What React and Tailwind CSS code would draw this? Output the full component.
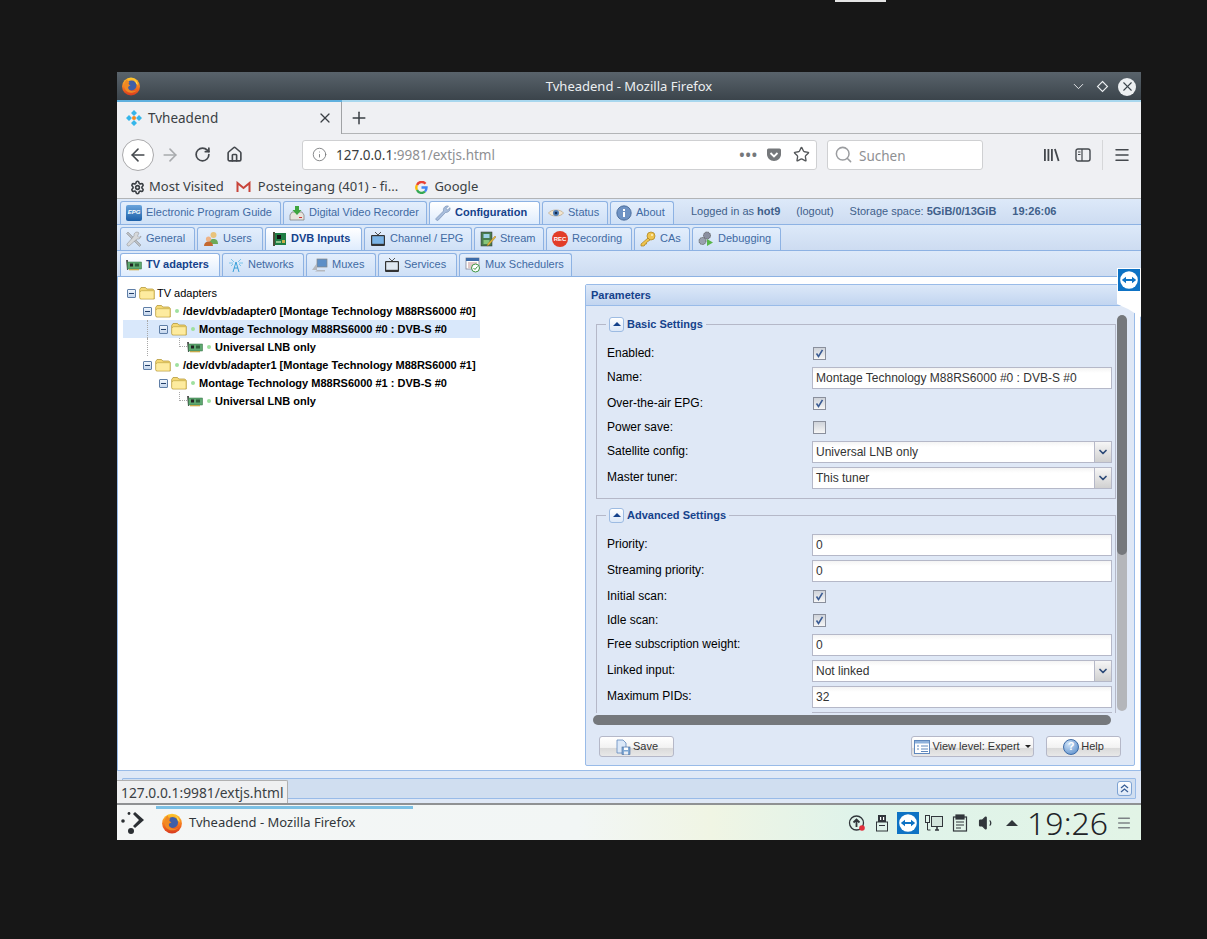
import { ChevronDown, Home, RotateCw, ArrowLeft, ArrowRight, Info, Star, Search, Menu, Plus, X, Settings, Volume1 } from 'lucide-react';

const Firefox = ({ size = 20 }) => (
  <svg width={size} height={size} viewBox="0 0 20 20">
    <defs>
      <linearGradient id="ffa" x1="0" y1="0" x2="0" y2="1">
        <stop offset="0" stopColor="#ffcb2e" />
        <stop offset="0.55" stopColor="#f5761f" />
        <stop offset="1" stopColor="#d8391f" />
      </linearGradient>
    </defs>
    <circle cx="10" cy="10.5" r="9" fill="url(#ffa)" />
    <circle cx="10.5" cy="9.5" r="5" fill="#3f5fa8" />
    <path d="M6 3c-3 3-4 8-1 11.500 3 3 8 3 11-.500-3 2-7 1.500-8.500-1-1-2 0-3 2-3.500-2-1-2.500-2-1-3.500C7.500 6 6.500 5 6 3z" fill="#f08a24" />
    <path d="M12 3c3 1 5 4 5 7 0-1-1-2-2-2.500C15 6 14 4 12 3z" fill="#ffe14d" />
  </svg>
);

const Tvh = () => (
  <svg width="16" height="16" viewBox="0 0 16 16">
    <path d="M8 0l3 3-3 3-3-3zM8 10l3 3-3 3-3-3z" fill="#35b6ea" />
    <path d="M3 5l3 3-3 3-3-3zM13 5l3 3-3 3-3-3z" fill="#35b6ea" />
    <circle cx="8" cy="8" r="2" fill="#f28a1e" />
  </svg>
);

const Epg = () => (
  <span className="flex h-[16px] w-[16px] items-center justify-center rounded-[2px] bg-[linear-gradient(#6aa4dc,#1c5fa8)] text-[6px] font-bold italic text-white">EPG</span>
);

const Dvr = () => (
  <svg width="16" height="16" viewBox="0 0 16 16">
    <path d="M1 10l2-3h10l2 3v5H1z" fill="#e8e4dc" stroke="#777" strokeWidth="0.7" />
    <rect x="10" y="12" width="3" height="1" fill="#c33" />
    <path d="M6 1h4v4h2.500L8 10 3.500 5H6z" fill="#3fa63f" />
  </svg>
);

const Wrench = () => (
  <svg width="16" height="16" viewBox="0 0 16 16">
    <path d="M1 13.500L8.500 6c-.5-2 .5-4.500 3-5 1-.2 1.500 0 2 .3L11 3.500l1.500 1.500L15 2.700c.5 2-1 4.800-4.500 4.800L3.200 15.200c-1 .8-3-.6-2.200-1.700z" fill="#a9bedc" stroke="#6d86ad" strokeWidth="0.6" />
  </svg>
);

const Eye = () => (
  <svg width="16" height="16" viewBox="0 0 16 16">
    <path d="M0.500 8C3 4 13 4 15.500 8 13 12 3 12 .5 8z" fill="#f1e5d0" stroke="#b79a70" strokeWidth="0.6" />
    <circle cx="8" cy="8" r="3" fill="#4d7cb5" />
    <circle cx="8" cy="8" r="1.300" fill="#13294a" />
  </svg>
);

const About = () => (
  <svg width="16" height="16" viewBox="0 0 16 16">
    <circle cx="8" cy="8" r="7.200" fill="#6f93c4" stroke="#3c5f90" strokeWidth="0.8" />
    <rect x="7" y="7" width="2" height="5" fill="#fff" />
    <rect x="7" y="4" width="2" height="2" fill="#fff" />
  </svg>
);

const Tools = () => (
  <svg width="16" height="16" viewBox="0 0 16 16">
    <path d="M2 1l13 13-1.500 1.500L.5 2.500z" fill="#b9bdc2" stroke="#777" strokeWidth="0.4" />
    <path d="M11 1c-2 0-3.500 2-3 4L1 13c-.5 1 1 2.500 2 2l8-7c2 .5 4-1 4-3l-2 1.500L11.500 5 13 2c-.5-.5-1-1-2-1z" fill="#d6d8da" stroke="#777" strokeWidth="0.4" />
  </svg>
);

const Users = () => (
  <svg width="16" height="16" viewBox="0 0 16 16">
    <circle cx="10.500" cy="4" r="3" fill="#e9c37c" />
    <path d="M6 13c0-4 2-5 4.500-5s4.500 1 4.500 5z" fill="#6eaa58" />
    <circle cx="5.500" cy="8" r="2.600" fill="#eeb285" />
    <path d="M1 15c0-3 2-4.500 4.500-4.500S10 12 10 15z" fill="#c4682f" />
  </svg>
);

const Card = () => (
  <svg width="16" height="16" viewBox="0 0 16 16">
    <rect x="2" y="1" width="2" height="14" fill="#4d4d3a" />
    <rect x="4" y="2" width="11" height="12" fill="#1e7d45" />
    <rect x="6" y="4" width="4" height="4" fill="#111" />
    <rect x="11" y="9" width="3" height="3" fill="#c9b04a" />
    <rect x="5" y="10" width="5" height="2" fill="#8fc58f" />
  </svg>
);

const WideCard = () => (
  <svg width="16" height="16" viewBox="0 0 16 16">
    <path d="M0 3h2v10H1z" fill="#555" />
    <rect x="1.500" y="5" width="14" height="7" fill="#5ea870" stroke="#2f6b3f" strokeWidth="0.5" />
    <rect x="4" y="6.500" width="3" height="3" fill="#222" />
    <rect x="9" y="6.500" width="4" height="3" fill="#2f5f3a" />
    <rect x="3" y="12" width="10" height="1.300" fill="#c6a94b" />
  </svg>
);

const Tv = ({ fill = '#7bb4e6' }) => (
  <svg width="16" height="16" viewBox="0 0 16 16">
    <path d="M5 1l3 3 3-3" fill="none" stroke="#444" strokeWidth="0.9" />
    <rect x="1" y="4" width="14" height="11" rx="1" fill="#333" />
    <rect x="2.200" y="5.200" width="11.600" height="7.600" fill={fill} />
  </svg>
);

const Stream = () => (
  <svg width="16" height="16" viewBox="0 0 16 16">
    <rect x="1" y="1" width="11" height="14" fill="#4a7c4f" stroke="#333" strokeWidth="0.5" />
    <rect x="3.500" y="3" width="6" height="4" fill="#9fd3e6" />
    <rect x="3.500" y="9" width="6" height="4" fill="#86c67a" />
    <path d="M15 5l1 1-7 8-2 1 .5-2z" fill="#e7b83e" stroke="#8a6b1c" strokeWidth="0.4" />
  </svg>
);

const Rec = () => (
  <span className="flex h-[16px] w-[16px] items-center justify-center rounded-full bg-[#e23d28] text-[6px] font-bold leading-none text-white">REC</span>
);

const Key = () => (
  <svg width="16" height="16" viewBox="0 0 16 16">
    <circle cx="11" cy="5" r="4" fill="#efc44f" stroke="#a87f1c" strokeWidth="0.7" />
    <path d="M8 7l-7 6v2h3l1-1v-1h1.500V11.500L10 9z" fill="#efc44f" stroke="#a87f1c" strokeWidth="0.7" />
    <circle cx="12" cy="4" r="1" fill="#fff3c4" />
  </svg>
);

const Gears = () => (
  <svg width="16" height="16" viewBox="0 0 16 16">
    <circle cx="9" cy="4.500" r="3.500" fill="#8a8fa0" stroke="#555" strokeWidth="0.8" strokeDasharray="1.200 0.500" />
    <circle cx="4.500" cy="10" r="3.500" fill="#9aa0ae" stroke="#555" strokeWidth="0.8" strokeDasharray="1.200 0.500" />
    <path d="M9 8l6 3.500L9 15z" fill="#59b64a" />
  </svg>
);

const Tower = () => (
  <svg width="16" height="16" viewBox="0 0 16 16" fill="none" stroke="#3aa0d8" strokeWidth="1">
    <path d="M8 5L5 15M8 5l3 10M6 11h4" />
    <path d="M3 2l3 3M13 2l-3 3M1 6h4M15 6h-4M3 9l2-2M13 9l-2-2" stroke="#7cc4ea" />
  </svg>
);

const Muxes = () => (
  <svg width="16" height="16" viewBox="0 0 16 16">
    <rect x="5" y="2" width="10" height="8" fill="#5d8fc7" stroke="#888" strokeWidth="0.7" />
    <path d="M0 13l5-7v7zM5 13h8v1.500H3z" fill="#b5b8bd" />
  </svg>
);

const Sched = () => (
  <svg width="16" height="16" viewBox="0 0 16 16">
    <rect x="1" y="1" width="13" height="11" fill="#fff" stroke="#778" strokeWidth="0.7" />
    <rect x="1" y="1" width="13" height="3" fill="#3c6ba8" />
    <path d="M3 6h9M3 8h9M3 10h5" stroke="#a66" strokeWidth="0.7" />
    <circle cx="10.500" cy="11" r="4" fill="#fff" stroke="#3d9440" strokeWidth="1" />
    <path d="M8.500 11l1.500 1.500 2.500-3" fill="none" stroke="#3d9440" />
  </svg>
);

const Folder = () => (
  <svg width="16" height="16" viewBox="0 0 16 16">
    <path d="M.7 4.500l1.300-2h4.500l1.300 1.500h6l1.500 1.500v8.500H2q-1.300 0-1.300-1.300z" fill="#f5d873" stroke="#b59a3c" strokeWidth="0.8" />
    <path d="M1.300 7q0-1.300 1.300-1.300h11.800V13.500H2.500q-1.200 0-1.200-1.200z" fill="#fdeb9f" />
    <path d="M1.300 7q0-1.300 1.300-1.300h12.200" fill="none" stroke="#c7ad4d" strokeWidth="0.8" />
  </svg>
);

const SaveIcon = () => (
  <svg width="16" height="16" viewBox="0 0 16 16">
    <path d="M2 1h6l3 3v10H2z" fill="#dbe8f8" stroke="#5f88bd" strokeWidth="0.8" />
    <rect x="7" y="8" width="8" height="7.500" fill="#7fa8d4" stroke="#46699a" strokeWidth="0.6" />
    <rect x="9" y="8.500" width="4" height="2.500" fill="#fff" />
    <rect x="9" y="12.500" width="4" height="3" fill="#e9eef5" />
  </svg>
);

const ViewIcon = () => (
  <svg width="16" height="16" viewBox="0 0 16 16">
    <rect x="0.500" y="1.500" width="15" height="13" fill="#fff" stroke="#5f88bd" />
    <rect x="1" y="2" width="14" height="2.500" fill="#8fb2dc" />
    <path d="M3 7h2M3 10h2M7 7h7M7 10h7M7 12.500h7" stroke="#5f88bd" />
  </svg>
);

const HelpIcon = () => (
  <span className="flex h-[16px] w-[16px] items-center justify-center rounded-full border border-[#3c6ba8] bg-[radial-gradient(circle_at_35%_30%,#cfe2f7,#4f86c6)] text-[11px] font-bold text-white">?</span>
);

const TeamV = ({ size = 22 }) => (
  <svg width={size} height={size} viewBox="0 0 22 22">
    <rect width="22" height="22" fill="#0e72c4" />
    <circle cx="11" cy="11" r="8.800" fill="#fff" />
    <path d="M3.800 11L8 7.800V10h6V7.800l4.200 3.200-4.200 3.200V12H8v2.200z" fill="#0e72c4" />
  </svg>
);

const tabGradient = 'bg-[linear-gradient(#e3eefc,#cfe0f6)]';

const Tab = ({ label, icon, active, width }) => (
  <div
    className={`flex h-full ${width} items-center gap-[4px] rounded-t-[3px] border border-b-0 border-[#8db2e3] pb-[1px] pl-[5px] text-[11px] ${
      active ? 'bg-[linear-gradient(#ffffff,#deecfd)] font-bold text-[#15428b]' : `${tabGradient} text-[#416aa3]`
    }`}
  >
    <span className="flex h-[16px] w-[16px] shrink-0 items-center justify-center">{icon}</span>
    <span className="whitespace-nowrap">{label}</span>
  </div>
);

const Strip = ({ tabs, children }) => (
  <div className="flex h-[26px] shrink-0 gap-[2px] border-b border-[#8db2e3] bg-[linear-gradient(#dde9f9,#cddcf1)] pl-[3px] pt-[2px]">
    {tabs.map((t) => (
      <Tab key={t.label} {...t} />
    ))}
    {children}
  </div>
);

const row1 = [
  { label: 'Electronic Program Guide', icon: <Epg />, width: 'w-[161px]' },
  { label: 'Digital Video Recorder', icon: <Dvr />, width: 'w-[144px]' },
  { label: 'Configuration', icon: <Wrench />, width: 'w-[111px]', active: true },
  { label: 'Status', icon: <Eye />, width: 'w-[66px]' },
  { label: 'About', icon: <About />, width: 'w-[64px]' },
];

const row2 = [
  { label: 'General', icon: <Tools />, width: 'w-[75px]' },
  { label: 'Users', icon: <Users />, width: 'w-[66px]' },
  { label: 'DVB Inputs', icon: <Card />, width: 'w-[97px]', active: true },
  { label: 'Channel / EPG', icon: <Tv />, width: 'w-[108px]' },
  { label: 'Stream', icon: <Stream />, width: 'w-[70px]' },
  { label: 'Recording', icon: <Rec />, width: 'w-[86px]' },
  { label: 'CAs', icon: <Key />, width: 'w-[56px]' },
  { label: 'Debugging', icon: <Gears />, width: 'w-[89px]' },
];

const row3 = [
  { label: 'TV adapters', icon: <WideCard />, width: 'w-[100px]', active: true },
  { label: 'Networks', icon: <Tower />, width: 'w-[82px]' },
  { label: 'Muxes', icon: <Muxes />, width: 'w-[70px]' },
  { label: 'Services', icon: <Tv fill="#dfe8f2" />, width: 'w-[79px]' },
  { label: 'Mux Schedulers', icon: <Sched />, width: 'w-[113px]' },
];

const Expander = () => (
  <span className="flex h-[16px] w-[16px] shrink-0 items-center justify-center">
    <span className="flex h-[9px] w-[9px] items-center justify-center rounded-[1px] border border-[#5f7ea6] bg-[linear-gradient(#f2f7fd,#c3d5ec)]">
      <span className="h-px w-[5px] bg-[#23406b]" />
    </span>
  </span>
);

const Indent = ({ line }) => (
  <span className="flex h-[18px] w-[16px] shrink-0 justify-center">
    {line && <span className="h-full border-l border-dotted border-[#a8a8a8]" />}
  </span>
);

const Elbow = () => (
  <span className="flex h-[18px] w-[16px] shrink-0 justify-end">
    <span className="h-[9px] w-[8px] border-b border-l border-dotted border-[#a8a8a8]" />
  </span>
);

const Dot = () => (
  <span className="flex w-[12px] shrink-0 pl-[4px]">
    <span className="h-[4px] w-[4px] rounded-full bg-[#9fe09f]" />
  </span>
);

const TreeRow = ({ indents = [], leaf, selected, plain, label }) => (
  <div className={`flex h-[18px] w-[357px] items-center ${selected ? 'bg-[#d9e8fb]' : ''}`}>
    {indents.map((line, i) => (
      <Indent key={i} line={line} />
    ))}
    {leaf ? <Elbow /> : <Expander />}
    <span className="flex h-[16px] w-[16px] shrink-0 items-center justify-center">{leaf ? <WideCard /> : <Folder />}</span>
    {plain ? <span className="w-[2px]" /> : <Dot />}
    <span className={`whitespace-nowrap text-[11px] text-black ${plain ? '' : 'font-bold'}`}>{label}</span>
  </div>
);

const inputCls = 'h-[22px] w-[300px] border border-[#b5b8c8] bg-[linear-gradient(#f4f4f4,#ffffff_25%)] pl-[3px] text-[12px] leading-[20px] text-[#333]';

const Label = ({ children, shift }) => (
  <span className={`w-[205px] shrink-0 text-[12px] text-black ${shift ? 'pb-[2px]' : ''}`}>{children}</span>
);

const TextRow = ({ label, value }) => (
  <div className="flex h-[22px] items-center">
    <Label shift>{label}</Label>
    <div className={inputCls}>{value}</div>
  </div>
);

const ComboRow = ({ label, value }) => (
  <div className="flex h-[22px] items-center">
    <Label shift>{label}</Label>
    <div className={`${inputCls} relative`}>
      {value}
      <span className="absolute inset-y-0 right-0 flex w-[17px] items-center justify-center border-l border-[#b5b8c8] bg-[linear-gradient(#f6f6f6,#d0d0d0)]">
        <ChevronDown size={12} strokeWidth={3.5} className="text-[#2c4a78]" />
      </span>
    </div>
  </div>
);

const CheckRow = ({ label, checked }) => (
  <div className="flex h-[20px] items-center">
    <Label>{label}</Label>
    <span className="ml-[1px] flex h-[13px] w-[13px] items-center justify-center border border-[#8a8f9c] bg-[linear-gradient(#cfd3da,#f6f6f6)]">
      {checked && (
        <svg width="9" height="9" viewBox="0 0 9 9">
          <path d="M1.500 4.500l2 3L7.500 .8" fill="none" stroke="#3b5c94" strokeWidth="1.600" />
        </svg>
      )}
    </span>
  </div>
);

const Section = ({ title, children, last }) => (
  <fieldset className={`w-[520px] border border-[#b5b8c8] pb-[9px] pl-[10px] ${last ? '' : 'mb-[8px]'}`}>
    <legend className="-ml-[1px] flex h-[16px] items-center gap-[3px] px-[3px]">
      <span className="flex h-[15px] w-[15px] items-center justify-center rounded-[3px] border border-[#9dbbe2] bg-[linear-gradient(#ffffff,#dce8f8)]">
        <span className="h-0 w-0 border-x-[4px] border-b-[4px] border-x-transparent border-b-[#15428b]" />
      </span>
      <span className="text-[11px] font-bold text-[#15428b]">{title}</span>
    </legend>
    <div className="flex flex-col gap-[4px] pt-[11px]">{children}</div>
  </fieldset>
);

const ExtButton = ({ width, icon, children }) => (
  <button className={`flex h-[21px] ${width} items-center justify-center gap-[2px] rounded-[3px] border border-[#b5b8c8] bg-[linear-gradient(#ffffff,#f2f2f2_55%,#dadada_60%,#e8e8e8)] text-[11px] text-[#333]`}>
    {icon}
    {children}
  </button>
);

const TitleBar = () => (
  <div className="relative flex h-[28px] shrink-0 items-center justify-center bg-[linear-gradient(#59636b,#3b444b)] pt-[1px] text-[13px] text-[#eceff1]">
    <span className="absolute left-[4px] top-[4px]">
      <Firefox />
    </span>
    Tvheadend - Mozilla Firefox
    <span className="absolute right-[5px] flex items-center gap-[9px]">
      <ChevronDown size={17} strokeWidth={1.300} className="text-[#eceff1]" />
      <svg width="13" height="13" viewBox="0 0 13 13">
        <path d="M6.500 1.500l5 5-5 5-5-5z" fill="none" stroke="#eceff1" strokeWidth="1.100" />
      </svg>
      <span className="flex h-[18px] w-[18px] items-center justify-center rounded-full bg-[#eceff1]">
        <X size={15} strokeWidth={1.700} className="text-[#3b444b]" />
      </span>
    </span>
  </div>
);

const TabBar = () => (
  <div className="flex h-[34px] shrink-0 flex-col bg-[#eff0f3]">
    <div className="h-[2px] bg-[linear-gradient(90deg,#5fb0de_22%,#a8d7ee_22%)]" />
    <div className="flex flex-1 text-[#3a3f44]">
      <div className="flex w-[225px] items-center border-r border-[#a0a2a5] pl-[9px] text-[13.500px]">
        <Tvh />
        <span className="ml-[6px] flex-1">Tvheadend</span>
        <X size={16} strokeWidth={1.800} className="mr-[8px]" />
      </div>
      <div className="flex flex-1 items-center border-b border-[#b2b4b6] pl-[7px]">
        <Plus size={20} strokeWidth={1.800} />
      </div>
    </div>
  </div>
);

const NavBar = () => (
  <div className="flex h-[41px] shrink-0 items-center bg-[#eff0f3] pl-[5px] text-[#44484d]">
    <span className="flex h-[32px] w-[32px] items-center justify-center rounded-full border border-[#a9a9ab] bg-white">
      <ArrowLeft size={20} strokeWidth={1.900} />
    </span>
    <ArrowRight size={20} strokeWidth={1.900} className="ml-[6px] text-[#a8aaad]" />
    <RotateCw size={17} strokeWidth={2.400} className="ml-[14px]" />
    <Home size={17} strokeWidth={2.300} className="ml-[15px]" />
    <div className="ml-[59px] flex h-[30px] w-[515px] items-center rounded-[3px] border border-[#cfd0d2] bg-white pl-[9px] pr-[6px] text-[13.500px]">
      <Info size={15} strokeWidth={1.400} className="text-[#77797c]" />
      <span className="ml-[9px] flex-1 pt-[2px] text-[#3a3d40]">
        127.0.0.1<span className="text-[#8e9093]">:9981/extjs.html</span>
      </span>
      <span className="text-[14px] font-bold leading-none tracking-[1px] text-[#75787b]">•••</span>
      <svg width="16" height="16" viewBox="0 0 16 16" className="ml-[8px]">
        <path d="M1 3q0-1.500 1.500-1.500h11Q15 1.500 15 3v4c0 4-3 7-7 7s-7-3-7-7z" fill="#75787b" />
        <path d="M4.500 6L8 9.500 11.500 6" fill="none" stroke="#fff" strokeWidth="1.800" />
      </svg>
      <Star size={17} strokeWidth={1.900} className="ml-[11px] text-[#55585b]" />
    </div>
    <div className="ml-[10px] flex h-[30px] w-[156px] items-center rounded-[3px] border border-[#cfd0d2] bg-white pl-[6px] text-[13.500px] text-[#8e9093]">
      <Search size={19} strokeWidth={1.900} className="text-[#9b9da0]" />
      <span className="ml-[6px] pt-[3px]">Suchen</span>
    </div>
    <svg width="17" height="16" viewBox="0 0 17 16" className="ml-[60px]" fill="#44484d">
      <rect x="1" y="2" width="1.800" height="12" />
      <rect x="4.500" y="2" width="1.800" height="12" />
      <rect x="8" y="2" width="1.800" height="12" />
      <path d="M11 2.300l1.700-.6 3.800 12-1.700.6z" />
    </svg>
    <svg width="16" height="14" viewBox="0 0 16 14" className="ml-[15px]" fill="none" stroke="#44484d">
      <rect x="1" y="1" width="14" height="12" rx="2" strokeWidth="1.400" />
      <path d="M7 1v12" strokeWidth="1.200" />
      <path d="M3 4h2.500M3 6.500h2.500" strokeWidth="1" />
    </svg>
    <span className="ml-[11px] h-[30px] w-px bg-[#d6d7d9]" />
    <Menu size={18} strokeWidth={2} className="ml-[10px]" />
  </div>
);

const Bookmarks = () => (
  <div className="flex h-[24px] shrink-0 items-center border-b border-[#b2b4b6] bg-[#eff0f3] pl-[13px] pt-[1px] text-[13px] text-[#3a3f44]">
    <Settings size={15} strokeWidth={2.600} />
    <span className="ml-[4px]">Most Visited</span>
    <svg width="15" height="12" viewBox="0 0 15 12" className="ml-[12px]" fill="none">
      <path d="M1.500 11V2l6 5 6-5v9" stroke="#c8443a" strokeWidth="2" />
    </svg>
    <span className="ml-[7px] tracking-[0.05px]">Posteingang (401) - fi...</span>
    <svg width="13" height="13" viewBox="0 0 13 13" className="ml-[17px]" fill="none" strokeWidth="2.400">
      <path d="M10.500 2.800A5 5 0 0 0 2 4" stroke="#ea4335" />
      <path d="M2 4a5 5 0 0 0 0 5" stroke="#fbbc05" />
      <path d="M2 9a5 5 0 0 0 8 1.500" stroke="#34a853" />
      <path d="M10 10.500c1-1 1.500-2 1.500-4H6.500" stroke="#4285f4" />
    </svg>
    <span className="ml-[6px]">Google</span>
  </div>
);

const Tree = () => (
  <div className="w-[467px] shrink-0 pl-[5px] pt-[7px]">
    <TreeRow plain label="TV adapters" />
    <TreeRow indents={[false]} label="/dev/dvb/adapter0 [Montage Technology M88RS6000 #0]" />
    <TreeRow indents={[false, true]} selected label="Montage Technology M88RS6000 #0 : DVB-S #0" />
    <TreeRow indents={[false, true, false]} leaf label="Universal LNB only" />
    <TreeRow indents={[false]} label="/dev/dvb/adapter1 [Montage Technology M88RS6000 #1]" />
    <TreeRow indents={[false, false]} label="Montage Technology M88RS6000 #1 : DVB-S #0" />
    <TreeRow indents={[false, false, false]} leaf label="Universal LNB only" />
  </div>
);

const Params = () => (
  <div className="mb-[4px] mt-[7px] flex w-[550px] flex-col rounded-[2px] border border-[#99bbe8] bg-[#dfe8f6]">
    <div className="flex h-[21px] shrink-0 items-center border-b border-[#99bbe8] bg-[linear-gradient(#dce8f8,#c2d5f0)] pl-[5px] text-[11px] font-bold text-[#15428b]">
      Parameters
    </div>
    <div className="flex h-[407px] shrink-0 overflow-hidden">
      <div className="w-[531px] shrink-0 pl-[10px] pt-[10px]">
        <Section title="Basic Settings">
          <CheckRow label="Enabled:" checked />
          <TextRow label="Name:" value="Montage Technology M88RS6000 #0 : DVB-S #0" />
          <CheckRow label="Over-the-air EPG:" checked />
          <CheckRow label="Power save:" />
          <ComboRow label="Satellite config:" value="Universal LNB only" />
          <ComboRow label="Master tuner:" value="This tuner" />
        </Section>
        <Section title="Advanced Settings" last>
          <TextRow label="Priority:" value="0" />
          <TextRow label="Streaming priority:" value="0" />
          <CheckRow label="Initial scan:" checked />
          <CheckRow label="Idle scan:" checked />
          <TextRow label="Free subscription weight:" value="0" />
          <ComboRow label="Linked input:" value="Not linked" />
          <TextRow label="Maximum PIDs:" value="32" />
          <TextRow label="" value="" />
        </Section>
      </div>
      <div className="mt-[9px] flex h-[396px] w-[10px] flex-col overflow-hidden rounded-full bg-[#b4b6ba]">
        <div className="h-[240px] rounded-full bg-[#75787c]" />
      </div>
    </div>
    <div className="flex h-[14px] shrink-0 items-center pl-[7px]">
      <div className="h-[10px] w-[518px] rounded-full bg-[#75787c]" />
    </div>
    <div className="flex flex-1 items-start pl-[13px] pr-[13px] pt-[9px]">
      <ExtButton width="w-[75px]" icon={<SaveIcon />}>Save</ExtButton>
      <div className="ml-auto flex gap-[12px]">
        <ExtButton width="w-[123px]" icon={<ViewIcon />}>
          View level: Expert
          <span className="ml-[3px] h-0 w-0 border-x-[3px] border-t-[3px] border-x-transparent border-t-[#222]" />
        </ExtButton>
        <ExtButton width="w-[75px]" icon={<HelpIcon />}>Help</ExtButton>
      </div>
    </div>
  </div>
);

const Footer = () => (
  <div className="relative flex h-[33px] shrink-0 flex-col border-t border-[#99bbe8] bg-[#dfe8f6] px-[5px] pt-[7px]">
    <div className="flex h-[21px] items-center justify-end rounded-[1px] border border-[#99bbe8] bg-[#d0def0] pr-[3px]">
      <span className="flex h-[15px] w-[15px] items-center justify-center rounded-[3px] border border-[#7ea3d3] bg-[linear-gradient(#ffffff,#dce8f8)]">
        <svg width="9" height="9" viewBox="0 0 9 9" fill="none" stroke="#3a5f96" strokeWidth="1.300">
          <path d="M1 4l3.500-3L8 4M1 8l3.500-3L8 8" />
        </svg>
      </span>
    </div>
    <div className="absolute bottom-0 left-0 flex h-[23px] w-[171px] items-center rounded-tr-[2px] border-r border-t border-[#b0b0b0] bg-[#eff0f1] pl-[4px] pt-[3px] font-['Noto_Sans',sans-serif] text-[13.800px] text-[#3a3f44]">
      127.0.0.1:9981/extjs.html
    </div>
  </div>
);

const Launcher = () => (
  <svg width="26" height="26" viewBox="0 0 26 26" fill="#2b2f33">
    <circle cx="9" cy="3.500" r="1.400" />
    <circle cx="3" cy="11" r="1.800" />
    <circle cx="11" cy="21" r="3" />
    <path d="M15 2l9 8-9 8-2-2 6-6-6-6z" />
  </svg>
);

const Taskbar = () => (
  <div className="flex h-[37px] shrink-0 items-center border-t-2 border-[#8f9193] bg-[linear-gradient(90deg,#f4f6f6,#f2f6f5_45%,#f0f5e4_58%,#dff3ea_72%,#e2f4e6)] font-['Noto_Sans',sans-serif] text-[#31363b]">
    <span className="ml-[3px] flex w-[36px] shrink-0">
      <Launcher />
    </span>
    <div className="relative flex h-full w-[257px] shrink-0 items-center pl-[5px] text-[13px]">
      <span className="absolute left-0 right-0 top-[1px] h-[3px] bg-[#7cc0e4]" />
      <Firefox size={22} />
      <span className="ml-[6px]">Tvheadend - Mozilla Firefox</span>
    </div>
    <div className="ml-auto flex items-center">
      <svg width="18" height="18" viewBox="0 0 18 18" fill="none" stroke="#31363b">
        <circle cx="8.500" cy="9" r="7" strokeWidth="1.300" />
        <path d="M8.500 13V6M5.500 8.500l3-3 3 3" strokeWidth="1.800" />
        <circle cx="14" cy="14" r="2.800" fill="#e2303c" stroke="none" />
      </svg>
      <svg width="12" height="18" viewBox="0 0 12 18" className="ml-[10px]" fill="#31363b">
        <rect x="2" y="1" width="8" height="7" />
        <rect x="0.500" y="8" width="11" height="9" fill="none" stroke="#31363b" />
        <rect x="4" y="3" width="1.200" height="3" fill="#fff" />
        <rect x="7" y="3" width="1.200" height="3" fill="#fff" />
        <rect x="3" y="11" width="6" height="1" />
      </svg>
      <span className="ml-[9px]">
        <TeamV />
      </span>
      <svg width="18" height="18" viewBox="0 0 18 18" className="ml-[6px]" fill="none" stroke="#31363b">
        <rect x="0.500" y="1.500" width="4" height="7" />
        <path d="M2.500 8.500V16h3" />
        <rect x="6.500" y="2.500" width="11" height="10" fill="#31363b" fillOpacity="0.08" />
        <path d="M10 16h4M12 12.500V16" strokeWidth="1.600" />
      </svg>
      <svg width="16" height="18" viewBox="0 0 16 18" className="ml-[9px]" fill="none" stroke="#31363b" strokeWidth="1.200">
        <rect x="1.500" y="3" width="13" height="14" />
        <rect x="4" y="1" width="8" height="4" fill="#31363b" />
        <path d="M4 8h8M4 11h8M4 14h5" />
      </svg>
      <Volume1 size={18} strokeWidth={1.500} fill="#31363b" className="ml-[10px]" />
      <span className="ml-[10px] h-0 w-0 border-x-[6px] border-b-[6px] border-x-transparent border-b-[#31363b]" />
      <span className="ml-[9px] text-[32px] font-light leading-none text-[#1f2428]">19:26</span>
      <Menu size={16} strokeWidth={2.200} className="ml-[8px] mr-[9px] text-[#7d8286]" />
    </div>
  </div>
);

export default function App() {
  return (
    <div className="relative h-[939px] w-full overflow-hidden bg-[#171717]">
      <div className="ml-[835px] h-[2px] w-[51px] bg-[#e4e4e4]" />
      <div className="ml-[117px] mt-[70px] flex h-[768px] w-[1024px] flex-col font-['Noto_Sans',sans-serif]">
        <TitleBar />
        <TabBar />
        <NavBar />
        <Bookmarks />
        <div className="relative flex h-[604px] shrink-0 flex-col bg-white font-['Liberation_Sans',sans-serif]">
          <Strip tabs={row1}>
            <div className="ml-[15px] flex items-center gap-[16px] pb-[3px] text-[11px] text-[#3f5f8a]">
              <span>Logged in as <b>hot9</b></span>
              <span>(logout)</span>
              <span>Storage space: <b>5GiB/0/13GiB</b></span>
              <b>19:26:06</b>
            </div>
          </Strip>
          <Strip tabs={row2} />
          <Strip tabs={row3} />
          <div className="flex flex-1 border-x border-[#99bbe8]">
            <Tree />
            <Params />
          </div>
          <Footer />
          <svg width="24" height="50" viewBox="0 0 24 50" className="absolute right-0 top-[69px]">
            <path d="M0 0h24v49L11 41 0 36z" fill="#fff" />
            <g transform="translate(1 1)">
              <TeamV />
            </g>
          </svg>
        </div>
        <Taskbar />
      </div>
    </div>
  );
}
